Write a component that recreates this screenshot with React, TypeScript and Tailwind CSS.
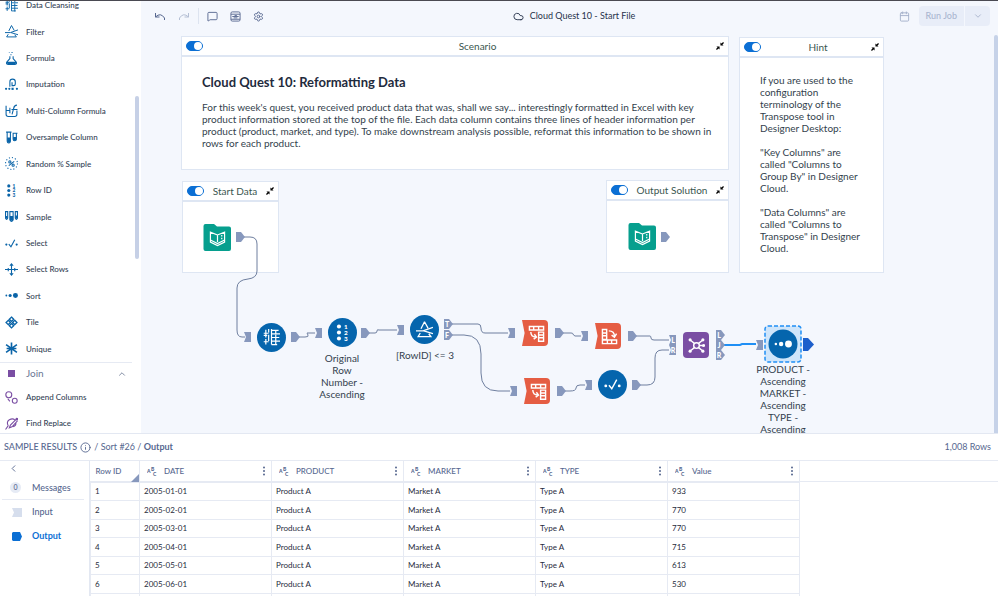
import type { ReactNode } from 'react'
import { Calendar, ChevronDown, ChevronLeft, ChevronUp, Cloud, Info, MessageSquare, Settings } from 'lucide-react'

type GlyphProps = { className?: string }

function Glyph({ className = '', children }: { className?: string; children: ReactNode }) {
  return (
    <svg viewBox="0 0 24 24" fill="none" stroke="currentColor" strokeWidth="2" aria-hidden="true" className={className}>
      {children}
    </svg>
  )
}

/* ── TOOL GLYPHS ── */
const CleanseGlyph = ({ className }: GlyphProps) => (
  <Glyph className={className}>
    <g strokeWidth="1.700">
      <path d="M4 1v11M8 0v5M8 8v9M12 0v22M1 6h7M1 18h7M4 14v8M1 9h5M12 2h10M12 7h12M12 12h11M12 17h12M12 22h8M18 1v5M18 8v15" />
    </g>
  </Glyph>
)

const FilterGlyph = ({ className }: GlyphProps) => (
  <Glyph className={className}>
    <path d="M0 14h10l14-5M12 1L7 11M12 1l5 9M11 14l13 4M6 17l-3 5h18l-3-4" strokeWidth="1.800" />
  </Glyph>
)

const FormulaGlyph = ({ className }: GlyphProps) => (
  <Glyph className={className}>
    <path d="M9 8v4L3 19q-1 4 3 4h12q4 0 3-4l-6-7V8" />
    <path d="M4 18h16l1 3q-9 4-18 0z" fill="currentColor" stroke="none" />
    <path d="M10 5h2M7 0h2M12 1h2" />
  </Glyph>
)

const ImputationGlyph = ({ className }: GlyphProps) => (
  <Glyph className={className}>
    <path d="M9 16V7q0-5 5-5t5 5v4q0 3-3 3h-3V8" />
    <g fill="currentColor" stroke="none">
      <circle cx="2" cy="20" r="2" />
      <circle cx="8" cy="20" r="2" />
      <rect x="12" y="18" width="4" height="4" />
      <circle cx="22" cy="20" r="2" />
    </g>
  </Glyph>
)

const MultiColumnGlyph = ({ className }: GlyphProps) => (
  <Glyph className={className}>
    <path d="M2 3v16q0 4 4 4h12q4 0 4-4v-7M2 12h7M9 7v10M22 2q-5 0-6 6l-3 11M12 10h11" />
  </Glyph>
)

const OversampleGlyph = ({ className }: GlyphProps) => (
  <Glyph className={className}>
    <path d="M2 2h10M14 4h9M4 3v14q0 5 3 5t3-5V3M15 5v10q0 3 3 3t3-3V5" />
    <path d="M4 12h6v7q-3 5-6 0zM15 11h6v5q-3 4-6 0z" fill="currentColor" stroke="none" />
  </Glyph>
)

const RandomGlyph = ({ className }: GlyphProps) => (
  <Glyph className={className}>
    <circle cx="12" cy="12" r="11" strokeDasharray="2 3.7" />
    <path d="M7 16L17 8" />
    <circle cx="9" cy="9" r="2" />
    <circle cx="15" cy="15" r="2" />
  </Glyph>
)

const RowIdGlyph = ({ className }: GlyphProps) => (
  <Glyph className={className}>
    <g fill="currentColor" stroke="none">
      <circle cx="7" cy="3.500" r="2.900" />
      <circle cx="7" cy="12" r="2.900" />
      <circle cx="7" cy="20.500" r="2.900" />
    </g>
    <g fill="currentColor" stroke="none" fontSize="9" fontWeight="900" fontFamily="Lato, sans-serif">
      <text x="14" y="7">1</text>
      <text x="14" y="15.500">2</text>
      <text x="14" y="24">3</text>
    </g>
  </Glyph>
)

const SampleGlyph = ({ className }: GlyphProps) => (
  <Glyph className={className}>
    <path d="M0 3h6M8 3h8M18 3h6M1 3v12q2 5 4 0V3M9 3v15q3 6 6 0V3M19 3v12q2 5 4 0V3" />
    <path d="M9 11h6v9H9zM1 11h4v5H1zM19 10h4v6h-4z" fill="currentColor" stroke="none" />
  </Glyph>
)

const SelectGlyph = ({ className }: GlyphProps) => (
  <Glyph className={className}>
    <path d="M7 13l4 5 7-13" />
    <circle cx="2.500" cy="14" r="2" fill="currentColor" stroke="none" />
    <circle cx="21.500" cy="14" r="2" fill="currentColor" stroke="none" />
  </Glyph>
)

const SelectRowsGlyph = ({ className }: GlyphProps) => (
  <Glyph className={className}>
    <path d="M0 12h24M12 7v10M6 9v6M18 9v6" />
    <path d="M12 0l4 5H8zM12 24l4-5H8z" fill="currentColor" stroke="none" />
    <path d="M12 4v4M12 16v4" />
  </Glyph>
)

const SortGlyph = ({ className }: GlyphProps) => (
  <Glyph className={className}>
    <g fill="currentColor" stroke="none">
      <circle cx="2.500" cy="12" r="1.700" />
      <circle cx="9.500" cy="12" r="2.900" />
      <circle cx="19.300" cy="12" r="4.600" />
    </g>
  </Glyph>
)

const TileGlyph = ({ className }: GlyphProps) => (
  <Glyph className={className}>
    <g strokeWidth="2.500">
      <path d="M12 2l4 4-4 4-4-4zM12 14l4 4-4 4-4-4zM6 8l4 4-4 4-4-4zM18 8l4 4-4 4-4-4z" />
    </g>
  </Glyph>
)

const UniqueGlyph = ({ className }: GlyphProps) => (
  <Glyph className={className}>
    <path d="M12 1v22M2 5l20 14M22 5L2 19M3 12h18" strokeWidth="3" />
  </Glyph>
)

const AppendGlyph = ({ className }: GlyphProps) => (
  <Glyph className={className}>
    <circle cx="7" cy="7" r="5.500" />
    <circle cx="18" cy="18" r="4.500" />
    <path d="M5 14l4 5" />
  </Glyph>
)

const FindGlyph = ({ className }: GlyphProps) => (
  <Glyph className={className}>
    <path d="M1 23l5-7M6 16q-4-7 2-11 6-3 10 0M21 4L10 15l-2 5 5-2L23 7M15 18q6-2 5-7" />
    <circle cx="22" cy="4" r="1.600" fill="currentColor" />
  </Glyph>
)

const BookGlyph = ({ className }: GlyphProps) => (
  <Glyph className={className}>
    <path d="M12 7L2 3v14l10 5 10-5V3zM12 7v10M2 14l10 5 10-5M18 7v2M18 11v2" strokeWidth="1.700" />
  </Glyph>
)

const TransposeGlyph = ({ className }: GlyphProps) => (
  <Glyph className={className}>
    <path d="M2 2h20v5H2zM8 2v5M15 2v5M15 10h7v13h-7zM15 14h7M15 18h7M4 10q0 7 7 7M9 13l3 4-4 3" />
  </Glyph>
)

const CrossTabGlyph = ({ className }: GlyphProps) => (
  <Glyph className={className}>
    <path d="M2 2h6v14H2zM2 7h6M2 11h6M2 17h20v5H2zM9 17v5M15 17v5M11 4q8 0 8 8M15 10l4 3 3-5" />
  </Glyph>
)

const JoinGlyph = ({ className }: GlyphProps) => (
  <Glyph className={className}>
    <circle cx="12" cy="12" r="4" />
    <path d="M9 9L4 5M15 9l5-4M9 15l-5 4M15 15l5 4M16 12h5" />
    <g fill="currentColor" stroke="none">
      <circle cx="3" cy="4" r="2.200" />
      <circle cx="21" cy="4" r="2.200" />
      <circle cx="3" cy="20" r="2.200" />
      <circle cx="21" cy="20" r="2.200" />
      <circle cx="22" cy="12" r="2.200" />
    </g>
  </Glyph>
)

const tools = [
  { name: 'Data Cleansing', Icon: CleanseGlyph },
  { name: 'Filter', Icon: FilterGlyph },
  { name: 'Formula', Icon: FormulaGlyph },
  { name: 'Imputation', Icon: ImputationGlyph },
  { name: 'Multi-Column Formula', Icon: MultiColumnGlyph },
  { name: 'Oversample Column', Icon: OversampleGlyph },
  { name: 'Random % Sample', Icon: RandomGlyph },
  { name: 'Row ID', Icon: RowIdGlyph },
  { name: 'Sample', Icon: SampleGlyph },
  { name: 'Select', Icon: SelectGlyph },
  { name: 'Select Rows', Icon: SelectRowsGlyph },
  { name: 'Sort', Icon: SortGlyph },
  { name: 'Tile', Icon: TileGlyph },
  { name: 'Unique', Icon: UniqueGlyph },
]

const rows = [
  ['2005-01-01', '933'],
  ['2005-02-01', '770'],
  ['2005-03-01', '770'],
  ['2005-04-01', '715'],
  ['2005-05-01', '613'],
  ['2005-06-01', '530'],
]

const columns = ['DATE', 'PRODUCT', 'MARKET', 'TYPE', 'Value']

/* ── SIDEBAR ── */
function Sidebar() {
  return (
    <aside className="relative flex w-[141px] shrink-0 flex-col overflow-hidden bg-white text-[8px] font-medium text-[#333f55]">
      <ul className="-mt-[9px] flex min-h-0 flex-1 flex-col">
        {tools.map(({ name, Icon }) => (
          <li key={name} className="flex flex-1">
            <button type="button" className="flex flex-1 items-center gap-2 pl-[5px] text-left">
              <Icon className="size-[13px] shrink-0 text-[#0a64a8]" />
              {name}
            </button>
          </li>
        ))}
      </ul>
      <button type="button" className="mr-[9px] flex h-[22px] shrink-0 items-center border-t border-[#e6eaf3] pl-2 pr-[5px] text-[10px] font-normal text-[#6b7894]">
        <span className="mr-[11px] size-[7px] bg-[#7a4ea3]" />
        Join
        <ChevronUp className="ml-auto size-[10px]" />
      </button>
      <ul className="-mb-[3px] shrink-0">
        <li>
          <button type="button" className="flex h-[26px] items-center gap-2 pl-[5px]">
            <AppendGlyph className="size-[13px] text-[#7a4ea3]" />
            Append Columns
          </button>
        </li>
        <li>
          <button type="button" className="flex h-[26px] items-center gap-2 pl-[5px]">
            <FindGlyph className="size-[13px] text-[#7a4ea3]" />
            Find Replace
          </button>
        </li>
      </ul>
      <span className="absolute right-[2px] top-[95px] h-[163px] w-1 rounded-full bg-[#c6d0e6]" />
    </aside>
  )
}

/* ── TOOLBAR ── */
function Toolbar() {
  return (
    <header className="flex h-[30px] shrink-0 items-center pl-[13px] pr-2 text-[#56678f]">
      <div className="flex flex-1 items-center">
        <button type="button" aria-label="Undo" className="mr-3">
          <svg viewBox="0 0 12 12" className="size-3" fill="none" stroke="currentColor">
            <path d="M1.500 3v4h4M1.500 7q5-5 9 1v2" />
          </svg>
        </button>
        <button type="button" aria-label="Redo" className="text-[#b4bfd4]">
          <svg viewBox="0 0 12 12" className="size-3" fill="none" stroke="currentColor">
            <path d="M10.500 3v4h-4M10.500 7q-5-5-9 1v2" />
          </svg>
        </button>
        <span className="mx-2 h-4 w-px bg-[#dde4f0]" />
        <button type="button" aria-label="Comment" className="mr-3">
          <MessageSquare className="size-[11px]" />
        </button>
        <button type="button" aria-label="Browse" className="mr-3">
          <svg viewBox="0 0 24 24" className="size-[11px]" fill="none" stroke="currentColor" strokeWidth="2">
            <rect x="2" y="2" width="20" height="20" rx="3" />
            <path d="M2 7h20M2 18h20M5 12h14M8 15h8M10 10h5" />
          </svg>
        </button>
        <button type="button" aria-label="Settings">
          <Settings className="size-[11px]" />
        </button>
      </div>
      <h1 className="flex items-center gap-[6px] pl-1 text-[9px] text-[#26324a]">
        <Cloud className="size-[11px]" />
        Cloud Quest 10 - Start File
      </h1>
      <div className="flex flex-1 items-center justify-end text-[#a3afc9]">
        <button type="button" aria-label="Schedule" className="mr-[9px]">
          <Calendar className="size-[11px]" />
        </button>
        <button type="button" disabled className="h-5 rounded-l-sm bg-[#e8edf8] px-[7px] text-[9px] font-medium text-[#aab6d0]">
          Run Job
        </button>
        <button type="button" aria-label="Run options" className="flex h-5 w-[26px] items-center justify-center rounded-r-sm border-l border-[#f4f7fd] bg-[#e8edf8]">
          <ChevronDown className="size-[10px]" />
        </button>
      </div>
    </header>
  )
}

/* ── CANVAS ── */
function Card({ title, className, titleClass = '', children }: { title: string; className: string; titleClass?: string; children?: ReactNode }) {
  return (
    <section className={`absolute border border-[#dee6f3] bg-white ${className}`}>
      <div className="flex h-5 items-center border-b-2 border-[#dee6f3] px-1">
        <input
          type="checkbox"
          defaultChecked
          aria-label={`Enable ${title}`}
          className="relative h-[10px] w-[17px] shrink-0 appearance-none rounded-full border border-[#0b6fd4] bg-[#0b6fd4] before:absolute before:right-0 before:top-0 before:size-2 before:rounded-full before:bg-white"
        />
        <h2 className={`flex-1 text-center text-[10px] text-[#3a564f] ${titleClass}`}>{title}</h2>
        <button type="button" aria-label={`Collapse ${title}`} className="text-black">
          <svg viewBox="0 0 18 18" className="size-2">
            <path d="M10 8V1l2.500 2.500L16 0l2 2-3.500 3.500L17 8zM8 10v7l-2.500-2.500L2 18l-2-2 3.500-3.500L1 10z" fill="currentColor" />
          </svg>
        </button>
      </div>
      {children}
    </section>
  )
}

function Folder({ className }: { className: string }) {
  return (
    <button type="button" aria-label="Input data" className={`absolute flex h-[27px] w-7 items-end justify-center text-white ${className}`}>
      <svg viewBox="0 0 28 27" className="absolute inset-0" aria-hidden="true">
        <path d="M2.500 0H11l3 2.500h12q2 0 2 2V25q0 2-2 2H2.500q-2 0-2-2V2q0-2 2-2z" fill="#069f8e" />
      </svg>
      <BookGlyph className="relative mb-1 size-[17px]" />
    </button>
  )
}

const nodes = [
  { id: 'cleanse', x: 116, y: 291, kind: 'circle', Icon: CleanseGlyph },
  { id: 'row-id', x: 187, y: 286, kind: 'circle', Icon: RowIdGlyph },
  { id: 'filter', x: 269, y: 283, kind: 'circle', Icon: FilterGlyph },
  { id: 'select', x: 457, y: 338, kind: 'circle', Icon: SelectGlyph },
  { id: 'transpose-1', x: 381, y: 288, kind: 'flag', Icon: TransposeGlyph },
  { id: 'transpose-2', x: 383, y: 346, kind: 'flag', Icon: TransposeGlyph },
  { id: 'cross-tab', x: 454, y: 291, kind: 'flag', Icon: CrossTabGlyph },
  { id: 'join', x: 542, y: 300, kind: 'square', Icon: JoinGlyph },
]

const kinds: Record<string, string> = {
  circle: 'size-[29px] rounded-full bg-[#0565ad]',
  flag: 'h-[26px] w-[26px] bg-[#e55d43] pl-[2px] rounded-r-sm [clip-path:polygon(0_0,100%_0,100%_100%,0_100%,10%_50%)]',
  square: 'size-[26px] rounded-sm bg-[#7a4ea3]',
}

const labels = [
  { text: 'Original Row Number - Ascending', box: 'left-[176px] top-[320px] w-[50px]' },
  { text: '[RowID] <= 3', box: 'left-[249px] top-[317px] w-[70px]' },
]

const outPorts: [number, number, string?][] = [
  [95, 205], [150, 305], [220, 301], [303, 292, 'T'], [303, 303, 'F'], [414, 301], [416, 359],
  [487, 304], [491, 353], [575, 303, 'L'], [575, 313, 'J'], [575, 323, 'R'], [520, 205],
]

const inPorts: [number, number, string?][] = [
  [103, 305], [174, 301], [256, 298], [367, 301], [369, 359], [440, 304], [444, 353],
  [528, 308, 'L'], [528, 318, 'R'], [615, 313],
]

function Wires() {
  return (
    <svg className="pointer-events-none absolute left-0 top-0 h-[401px] w-[857px]" viewBox="0 0 857 401" fill="none" aria-hidden="true">
      <g stroke="#6f7f9f">
        <path d="M103 205h6q7 0 7 7v27q0 7-9 8-11 1-11 9v42q0 7 5 7h3" />
        <path d="M158 305h6q4 0 3-2t-1-2h8" />
        <path d="M228 301h6q2 0 2-2t2-1h18" />
        <path d="M311 292h26q3 0 3 4 0 5 4 5h23" />
        <path d="M311 303h12q17 0 17 19v19q0 18 17 18h12" />
        <path d="M422 301h8q2 0 2 1t2 2h6" />
        <path d="M424 359h5q6 0 6-3 0-3 4-3h5" />
        <path d="M495 304h14q1 0 1 2t3 2h15" />
        <path d="M499 353h7q8 0 8-8v-19q0-8 7-8h7" />
      </g>
      <path d="M583 313h16l2-1h14" stroke="#1f8ff5" strokeWidth="2" />
      <g fill="#8798bd">
        {outPorts.map(([x, y]) => (
          <path key={`${x}-${y}`} transform={`translate(${x} ${y})`} d="M0-5h5l4 5-4 5H0z" />
        ))}
        {inPorts.map(([x, y]) => (
          <path key={`${x}-${y}`} transform={`translate(${x} ${y})`} d="M0-5h7V5H0l2-5z" />
        ))}
      </g>
      <path d="M662 306h5l6 6.500-6 6.500h-5z" fill="#1d5fcb" />
      <g fill="#fff" fontSize="7" fontWeight="900" textAnchor="middle" fontFamily="Lato, sans-serif">
        {[...outPorts.map(([x, y, t]) => [x + 3, y, t] as const), ...inPorts.map(([x, y, t]) => [x + 4, y, t] as const)]
          .filter(([, , t]) => t)
          .map(([x, y, t]) => (
            <text key={`${x}-${y}`} x={x} y={y + 3}>{t}</text>
          ))}
      </g>
    </svg>
  )
}

function Canvas() {
  return (
    <div className="relative -mt-px min-h-0 flex-1 overflow-hidden text-[10px] leading-3 text-[#333f4d]">
      <div className="absolute inset-x-0 bottom-0 top-[2px]">
        <Card title="Scenario" className="left-10 top-1 h-[134px] w-[548px]" titleClass="pl-9">
          <div className="pl-5 pr-3 pt-4">
            <h3 className="mb-[10px] text-[13px] font-bold leading-[18px] text-[#1f2b3d]">Cloud Quest 10: Reformatting Data</h3>
            <p>
              For this week's quest, you received product data that was, shall we say... interestingly formatted in Excel with key
              product information stored at the top of the file. Each data column contains three lines of header information per
              product (product, market, and type). To make downstream analysis possible, reformat this information to be shown in
              rows for each product.
            </p>
          </div>
        </Card>
        <Card title="Hint" className="left-[598px] top-[5px] h-[236px] w-[145px]" titleClass="pl-1">
          <div className="space-y-3 pl-5 pr-4 pt-4">
            <p>If you are used to the configuration terminology of the Transpose tool in Designer Desktop:</p>
            <p>"Key Columns" are called "Columns to Group By" in Designer Cloud.</p>
            <p>"Data Columns" are called "Columns to Transpose" in Designer Cloud.</p>
          </div>
        </Card>
        <Card title="Start Data" className="left-[41px] top-[149px] h-[92px] w-[97px]" />
        <Card title="Output Solution" className="left-[465px] top-[148px] h-[93px] w-[123px]" />

        <Folder className="left-[62px] top-[192px]" />
        <Folder className="left-[487px] top-[191px]" />

        <Wires />

        {nodes.map(({ id, x, y, kind, Icon }) => (
          <button
            key={id}
            type="button"
            aria-label={id}
            className={`absolute flex items-center justify-center text-white ${kinds[kind]}`}
            style={{ left: x, top: y }}
          >
            <Icon className="size-[17px]" />
          </button>
        ))}

        {labels.map((l) => (
          <p key={l.text} className={`absolute text-center ${l.box}`}>{l.text}</p>
        ))}

        {/* selected sort tool */}
        <div className="absolute left-[606px] top-[293px] flex w-[72px] flex-col items-center">
          <button type="button" aria-label="sort" className="relative flex size-[38px] items-center justify-center text-white">
            <svg viewBox="0 0 38 38" className="absolute inset-0" aria-hidden="true">
              <rect x="1" y="1" width="36" height="36" rx="3" fill="#cfe5fa" stroke="#1f8ff5" strokeWidth="1.500" strokeDasharray="4 2" />
              <circle cx="19" cy="19" r="14.500" fill="#0565ad" />
            </svg>
            <SortGlyph className="relative size-[18px]" />
          </button>
          <p className="w-[60px] text-center">PRODUCT - Ascending MARKET - Ascending TYPE - Ascending</p>
        </div>
      </div>

      <span className="absolute right-0 top-[5px] h-full w-1 rounded-t-full bg-[#c6d2e8]" />
    </div>
  )
}

/* ── RESULTS ── */
function TypeIcon() {
  return (
    <svg viewBox="0 0 10 10" className="size-[10px]" fill="currentColor" fontSize="5" fontWeight="900" fontFamily="Lato, sans-serif" aria-hidden="true">
      <text x="0" y="7">A</text>
      <text x="4" y="5">B</text>
      <text x="6" y="10">C</text>
    </svg>
  )
}

function Results() {
  return (
    <section className="flex h-[163px] shrink-0 flex-col overflow-hidden border-t border-[#e3e8f2] bg-white text-[#56678f]">
      <div className="flex h-[27px] shrink-0 items-center border-b border-[#e6eaf3] pl-1 pr-[7px] text-[9px]">
        <h2 className="font-medium">SAMPLE RESULTS</h2>
        <Info className="mx-[3px] size-[11px]" />
        <span className="whitespace-pre">/ Sort #26 / <b className="font-bold">Output</b></span>
        <span className="ml-auto">1,008 Rows</span>
      </div>
      <div className="flex min-h-0 flex-1">
        <nav className="w-[90px] shrink-0 border-r border-[#e3e8f2] text-[9px] font-medium">
          <button type="button" aria-label="Collapse panel" className="flex h-[15px] items-center pl-2">
            <ChevronLeft className="size-[11px]" />
          </button>
          <div className="ml-[2px] mr-[5px] border-b border-[#e6eaf3]">
            <button type="button" className="flex h-[23px] items-center pl-2">
              <span className="mr-[11px] flex size-[11px] items-center justify-center rounded-full bg-[#e6ebf5] text-[7px]">0</span>
              Messages
            </button>
          </div>
          <button type="button" className="flex h-6 items-center pl-3">
            <svg viewBox="0 0 10 9" className="mr-[10px] h-[9px] w-[10px]"><path d="M0 0h10v9H0l2-4.500z" fill="#d6deed" /></svg>
            Input
          </button>
          <button type="button" className="flex h-6 items-center pl-3 font-bold text-[#0b6fd4]">
            <svg viewBox="0 0 10 9" className="mr-[10px] h-[9px] w-[10px]"><path d="M1 0h7l2 4.500L8 9H1L0 8V1z" fill="#0b6fd4" /></svg>
            Output
          </button>
        </nav>
        <div className="min-w-0 flex-1 overflow-hidden bg-[linear-gradient(#e6eaf3,#e6eaf3)] bg-[length:100%_1px] bg-[position:0_20px] bg-no-repeat">
          <table className="w-[710px] table-fixed border-collapse text-left text-[8px] leading-[10px] text-[#1f2b3d]">
            <thead>
              <tr className="h-[21px] text-[#56678f]">
                <th className="relative w-[49px] border-r border-[#e6eaf3] pl-[5px] font-medium">
                  Row ID
                  <svg viewBox="0 0 8 8" className="absolute bottom-0 right-0 size-2" aria-hidden="true"><path d="M8 0v8H0z" fill="#8798bd" /></svg>
                </th>
                {columns.map((c) => (
                  <th key={c} className="border-r border-[#e6eaf3] pl-[7px] font-medium">
                    <span className="flex items-center gap-[7px] pr-1">
                      <TypeIcon />
                      {c}
                      <button type="button" aria-label={`${c} menu`} className="ml-auto">
                        <svg viewBox="0 0 6 10" className="h-[10px] w-[6px]" fill="currentColor">
                          <circle cx="3" cy="1.500" r="1" />
                          <circle cx="3" cy="5" r="1" />
                          <circle cx="3" cy="8.500" r="1" />
                        </svg>
                      </button>
                    </span>
                  </th>
                ))}
              </tr>
            </thead>
            <tbody className="[&_td]:border [&_td]:border-[#e6eaf3] [&_td]:pl-1">
              {rows.map(([date, value], i) => (
                <tr key={date} className="odd:h-[18px] even:h-[19px]">
                  <td>{i + 1}</td>
                  <td>{date}</td>
                  <td>Product A</td>
                  <td>Market A</td>
                  <td>Type A</td>
                  <td>{value}</td>
                </tr>
              ))}
              <tr className="h-[18px]">
                <td /><td /><td /><td /><td /><td />
              </tr>
            </tbody>
          </table>
        </div>
      </div>
    </section>
  )
}

export default function App() {
  return (
    <div className="flex h-screen flex-col overflow-hidden border-t border-[#4a4a52] bg-white font-['Lato',sans-serif]">
      <div className="flex min-h-0 flex-1">
        <Sidebar />
        <main className="flex min-w-0 flex-1 flex-col bg-[#f4f7fd]">
          <Toolbar />
          <Canvas />
        </main>
      </div>
      <Results />
    </div>
  )
}
